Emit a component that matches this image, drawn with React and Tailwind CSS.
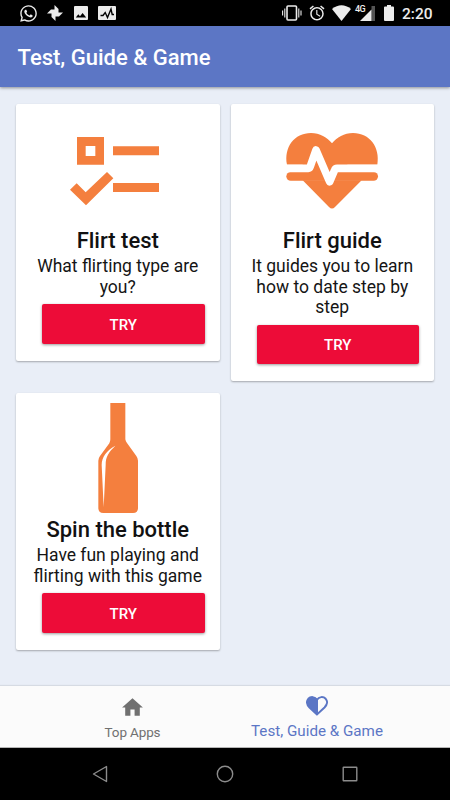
import React from 'react';
import { FaWhatsapp } from 'react-icons/fa';
import { MdAccessAlarm } from 'react-icons/md';

function ChecklistArt() {
  return (
    <svg viewBox="1 0 330 330" className="h-[110px] w-[110px]" fill="#f47f3e">
      <path fillRule="evenodd" d="M43 69h81v83H43zM69 96v30h29V96z" />
      <path d="M151 97h138v27H151zM151 207h138v27H151z" />
      <path d="M22 227l20-19 27 27 64-61 19 19-82 81z" />
    </svg>
  );
}

function HeartPulseArt() {
  return (
    <svg viewBox="-2 0 330 330" className="h-[110px] w-[110px]" fill="#f47f3e">
      <path d="M28 152C18 100 50 57 100 57c26 0 49 13 63 31 14-18 37-31 63-31 50 0 82 43 73 95h-90v30H75v-30z" />
      <rect x="26" y="174" width="275" height="26" rx="13" />
      <path d="M75 199l79 80q9 9 18 0l80-80z" />
      <path
        d="M18 163H92q4 0 6-6L115 108 156 203 171 168q2-5 7-5H312"
        fill="none"
        stroke="#fff"
        strokeWidth="23"
        strokeLinejoin="round"
      />
    </svg>
  );
}

function BottleArt() {
  return (
    <svg viewBox="1 0 330 330" className="h-[110px] w-[110px]">
      <path
        fill="#f47f3e"
        d="M143 0h45v109q1 6 5 11l28 39q5 7 5 14v142q0 15-15 15h-89q-15 0-15-15V173q0-7 5-14l28-38q3-6 3-12z"
      />
      <path fill="#fff" d="M158 128c-25 14-41 33-41 58l6 127 6-127c0-26 9-38 29-58z" />
    </svg>
  );
}

const cards = [
  { title: 'Flirt test', text: 'What flirting type are you?', art: ChecklistArt },
  { title: 'Flirt guide', text: 'It guides you to learn how to date step by step', art: HeartPulseArt },
  { title: 'Spin the bottle', text: 'Have fun playing and flirting with this game', art: BottleArt },
];

function Card({ title, text, art: Art }) {
  return (
    <div className="flex flex-col items-center rounded-[2px] bg-white pt-2.5 pb-[17px] shadow-[0_1px_2px_rgba(0,0,0,0.3)]">
      <Art />
      <h2 className="h-[32px] text-[22px] leading-[33px] font-medium text-[#111]">{title}</h2>
      <p className="w-[180px] text-center text-[17.5px] leading-[20.5px] text-[#151515]">{text}</p>
      <button className="mt-[7px] mr-[15px] ml-[26px] h-[39.5px] self-stretch rounded-[2px] bg-[#ed0c38] pt-[2px] text-[15px] font-medium text-white shadow-[0_1px_3px_rgba(0,0,0,0.4)]">
        TRY
      </button>
    </div>
  );
}

function StatusBar() {
  return (
    <div className="flex h-[26px] items-center bg-black pl-[19px] text-[#ececec]">
      <FaWhatsapp className="h-[19px] w-[19px]" />
      <svg viewBox="0 0 16 16" className="ml-[9px] h-4 w-4" fill="currentColor">
        <path d="M7.500 0l4 4v4h-4zM16 7.500l-4 4H8v-4zM8.500 16l-4-4V8h4zM0 8.500l4-4h4v4z" />
      </svg>
      <svg viewBox="0 0 14 14" className="ml-[11px] h-3.5 w-3.5">
        <rect width="14" height="14" rx="1" fill="currentColor" />
        <path d="M1.800 11.500l2.500-3.300 1.700 2L8.600 7l3.600 4.500z" fill="#000" />
      </svg>
      <svg viewBox="0 0 18 14" className="ml-2.5 h-3.5 w-[18px]">
        <rect width="18" height="14" rx="1" fill="currentColor" />
        <path d="M2.500 9.500H5L7.200 6.500l2.300 5L13 3l1.200 5.500H16" fill="none" stroke="#000" strokeWidth="1.400" />
      </svg>
      <div className="ml-auto flex items-center pr-[18px]">
        <svg viewBox="0 0 20 16" className="h-4 w-5" fill="none" stroke="currentColor">
          <rect x="5" y="1" width="9.500" height="14" rx="1" strokeWidth="1.600" />
          <path d="M.6 5.500v5M2.800 3.500v9M16.800 3.500v9M19 5.500v5" strokeWidth="1.100" />
        </svg>
        <MdAccessAlarm className="ml-[6px] h-[18px] w-[18px]" />
        <svg viewBox="0 0 19 16" className="ml-[6px] h-4 w-[19px]" fill="currentColor">
          <path d="M0 4Q9.500-3.500 19 4L9.500 16z" />
        </svg>
        <div className="relative ml-[9px] h-4 w-[15px]">
          <svg viewBox="0 0 15 16" className="h-4 w-[15px]">
            <path d="M11.500 1H15v15h-3.500z" fill="#555" />
            <path d="M0 16L11.500 4.500V16z" fill="currentColor" />
          </svg>
          <span className="absolute -top-px -left-[5px] text-[9px] leading-[11px] font-medium tracking-[-0.5px]">
            4G
          </span>
        </div>
        <svg viewBox="0 0 10 16" className="ml-[9px] h-4 w-2.5" fill="currentColor">
          <path d="M3 0h4v1.500h2q1 0 1 1V15q0 1-1 1H1q-1 0-1-1V2.500q0-1 1-1h2z" />
        </svg>
        <span className="ml-2 w-[30px] pt-px text-[15.500px] leading-[26px] font-medium whitespace-nowrap">2:20</span>
      </div>
    </div>
  );
}

function BottomTabs() {
  return (
    <div className="flex h-[62px] justify-center border-b border-[#b5b5b5] bg-[#fbfbfb] shadow-[0_-1px_1px_rgba(0,0,0,0.08)]">
      <div className="flex w-[184px] flex-col items-center pt-[9px] pr-px text-[#707070]">
        <svg viewBox="0 0 24 24" className="h-[25px] w-[25px]" fill="currentColor">
          <path d="M10 20v-6h4v6h5v-8h3L12 3 2 12h3v8z" />
        </svg>
        <span className="mt-1 text-[13.5px] leading-4 tracking-[-0.01em]">Top Apps</span>
      </div>
      <div className="flex w-[184px] flex-col items-center pt-[7px] text-[#5b76c5]">
        <svg viewBox="0 0 22 20" className="mt-[3px] h-5 w-[22px]" stroke="currentColor" strokeWidth="2">
          <path
            fill="none"
            d="M11 18.500L3.500 11.500C.5 8.500.3 5 2.300 2.800 4.700.3 9 .5 11 3.800c2-3.300 6.300-3.500 8.700-1C21.700 5 21.500 8.500 18.500 11.500z"
          />
          <path
            fill="currentColor"
            stroke="none"
            d="M12 19L3.500 11.500C.5 8.500.3 5 2.300 2.800 4.700.3 9 .5 12 3.800z"
          />
        </svg>
        <span className="mt-[7px] text-[15.200px] leading-4">Test, Guide &amp; Game</span>
      </div>
    </div>
  );
}

function SystemNav() {
  return (
    <div className="flex h-[52px] items-center justify-center gap-[108px] bg-black pr-px">
      <svg viewBox="0 0 16 18" className="h-[18px] w-4" fill="none" stroke="#8c8c8c" strokeWidth="1.400">
        <path d="M14.500 1.500v15L1.500 9z" strokeLinejoin="round" />
      </svg>
      <svg viewBox="0 0 18 18" className="h-[18px] w-[18px]" fill="none" stroke="#8c8c8c" strokeWidth="1.400">
        <circle cx="9" cy="9" r="7.700" />
      </svg>
      <svg viewBox="0 0 16 16" className="h-4 w-4" fill="none" stroke="#8c8c8c" strokeWidth="1.400">
        <rect x="1.200" y="1.200" width="13.600" height="13.600" rx="0.500" />
      </svg>
    </div>
  );
}

export default function App() {
  return (
    <div className="flex h-[800px] w-[450px] flex-col bg-[#e9eef7] font-['Roboto',sans-serif]">
      <StatusBar />
      <header className="flex h-[61px] items-center bg-[#5c76c5] pt-[2px] pl-[17.5px] shadow-[0_1px_3px_rgba(0,0,0,0.4)]">
        <h1 className="text-[22px] font-medium text-white">Test, Guide &amp; Game</h1>
      </header>
      <main className="grid flex-1 grid-cols-2 content-start items-start gap-x-[11px] gap-y-3 pt-[17px] pr-4 pl-4">
        {cards.map((card) => (
          <Card key={card.title} {...card} />
        ))}
      </main>
      <BottomTabs />
      <SystemNav />
    </div>
  );
}
